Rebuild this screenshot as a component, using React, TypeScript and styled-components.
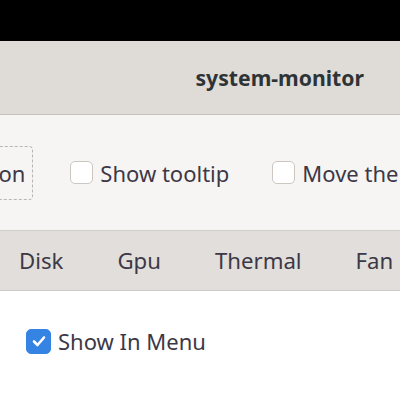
import styled, { createGlobalStyle } from "styled-components"

const Global = createGlobalStyle`
  html, body {
    margin: 0;
    padding: 0;
    background: #ffffff;
    overflow: hidden;
  }
  body {
    font-family: "Noto Sans", "DejaVu Sans", sans-serif;
    color: #3d3846;
  }
`

const Window = styled.div`
  width: 400px;
  height: 400px;
  display: flex;
  flex-direction: column;
  overflow: hidden;
`

const Backdrop = styled.div`
  height: 41px;
  background: #000000;
  flex-shrink: 0;
`

const HeaderBar = styled.header`
  height: 73px;
  flex-shrink: 0;
  display: flex;
  align-items: center;
  justify-content: flex-end;
  padding-right: 36px;
  background: #dfdcd8;
  border-bottom: 1px solid #c4c0bb;
`

const Title = styled.h1`
  margin: 0;
  font-size: 21.2px;
  font-weight: 700;
  color: #2e3436;
  white-space: nowrap;
`

const Toolbar = styled.div`
  height: 115px;
  flex-shrink: 0;
  display: flex;
  align-items: center;
  background: #f6f5f4;
  border-bottom: 1px solid #d2cec9;
  white-space: nowrap;
`

const Button = styled.button`
  margin-left: -69px;
  height: 54px;
  padding: 0 7px 0 10px;
  background: transparent;
  border: 1px dashed #b9b4ae;
  border-radius: 4px;
  font: inherit;
  font-size: 22px;
  color: #3d3846;
  flex-shrink: 0;
`

const Check = styled.label<{ $gap: number }>`
  display: flex;
  align-items: center;
  gap: 7px;
  margin-left: ${(p) => p.$gap}px;
  font-size: 22px;
  flex-shrink: 0;
`

const Box = styled.span<{ $on?: boolean }>`
  width: ${(p) => (p.$on ? 25 : 23)}px;
  height: ${(p) => (p.$on ? 25 : 23)}px;
  box-sizing: border-box;
  border-radius: 5px;
  border: 1px solid ${(p) => (p.$on ? "#3584e4" : "#cdc7c2")};
  background: ${(p) => (p.$on ? "#3584e4" : "#ffffff")};
  display: flex;
  align-items: center;
  justify-content: center;
  flex-shrink: 0;
`

const TabBar = styled.nav`
  height: 59px;
  flex-shrink: 0;
  display: flex;
  align-items: center;
  margin-left: -8px;
  background: #e1dedb;
  border-bottom: 1px solid #cfcbc6;
  white-space: nowrap;
`

const Tab = styled.span`
  padding: 0 27px;
  font-size: 22.2px;
  color: #3d3846;
  flex-shrink: 0;
`

const Content = styled.section`
  flex: 1;
  background: #ffffff;
  padding: 35px 0 0 26px;
`

const Tick = () => (
  <svg width="16" height="16" viewBox="0 0 16 16">
    <path d="M3 8.5 L6.5 12 L13 4.5" fill="none" stroke="#ffffff" strokeWidth="2.6" strokeLinecap="round" strokeLinejoin="round" />
  </svg>
)

export default function App() {
  return (
    <Window>
      <Global />
      <Backdrop />
      <HeaderBar>
        <Title>system-monitor</Title>
      </HeaderBar>
      <Toolbar>
        <Button>Position</Button>
        <Check $gap={37}>
          <Box />
          Show tooltip
        </Check>
        <Check $gap={43}>
          <Box />
          Move the
        </Check>
      </Toolbar>
      <TabBar>
        <Tab>Disk</Tab>
        <Tab>Gpu</Tab>
        <Tab>Thermal</Tab>
        <Tab>Fan</Tab>
      </TabBar>
      <Content>
        <Check $gap={0}>
          <Box $on>
            <Tick />
          </Box>
          Show In Menu
        </Check>
      </Content>
    </Window>
  )
}
